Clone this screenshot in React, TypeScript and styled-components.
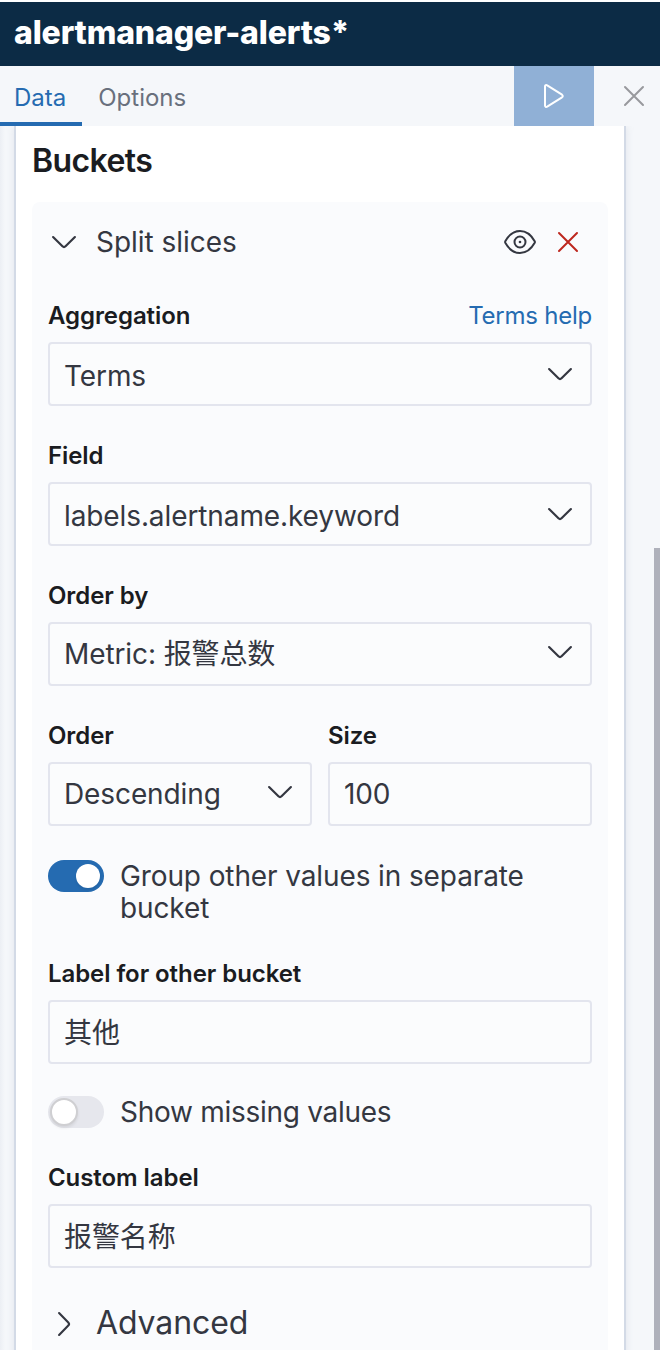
import React from "react";
import styled, { createGlobalStyle } from "styled-components";

const GlobalStyle = createGlobalStyle`
  *, *::before, *::after { box-sizing: border-box; }
  body {
    margin: 0;
    background: #ffffff;
    font-family: Inter, "Noto Sans CJK SC", sans-serif;
    color: #343741;
    overflow: hidden;
  }
  button, input { font: inherit; color: inherit; letter-spacing: inherit; }
`;

const Page = styled.div`
  width: 660px;
  height: 1350px;
  padding-top: 2px;
  display: flex;
  flex-direction: column;
  overflow: hidden;
  letter-spacing: -0.0065em;
`;

const TitleBar = styled.header`
  flex: 0 0 64px;
  padding: 0 14px;
  background: #0c2b45;
  color: #ffffff;
  font-size: 32px;
  font-weight: 800;
  line-height: 62px;
  letter-spacing: -0.005em;
`;

const TabBar = styled.nav`
  flex: 0 0 60px;
  display: flex;
  background: #f5f7fa;
`;

const Tab = styled.button<{ $active?: boolean }>`
  border: 0;
  border-bottom: 4px solid ${(p) => (p.$active ? "#256bb1" : "transparent")};
  background: none;
  padding: 7px 16px 0 ${(p) => (p.$active ? "14px" : "16px")};
  min-width: 82px;
  text-align: left;
  font-size: 24px;
  line-height: 48px;
  letter-spacing: 0;
  color: ${(p) => (p.$active ? "#256bb1" : "#69707d")};
`;

const BarButton = styled.button<{ $filled?: boolean }>`
  width: ${(p) => (p.$filled ? "80px" : "66px")};
  padding: ${(p) => (p.$filled ? "0" : "0 0 0 14px")};
  margin-left: ${(p) => (p.$filled ? "auto" : "0")};
  border: 0;
  display: flex;
  align-items: center;
  justify-content: center;
  background: ${(p) => (p.$filled ? "#90b0d6" : "transparent")};
  color: ${(p) => (p.$filled ? "#ffffff" : "#98999d")};
`;

const Body = styled.main`
  position: relative;
  flex: 1;
  min-height: 0;
  padding: 0 34px 0 14px;
  background: linear-gradient(90deg, #eceff4 0, #f5f7fa 5px, #f5f7fa 100%);
  overflow: hidden;
`;

const Panel = styled.section`
  height: 1300px;
  padding: 0 16px;
  border: solid #d3dae6;
  border-width: 0 2px;
  background: #ffffff;
  box-shadow: 0 0 8px rgba(152, 162, 179, 0.2);
`;

const PanelTitle = styled.h2`
  margin: 0;
  height: 76px;
  font-size: 32px;
  font-weight: 600;
  line-height: 70px;
  letter-spacing: -0.019em;
  color: #1a1c21;
`;

const Card = styled.div`
  height: 1200px;
  padding: 16px;
  border-radius: 8px;
  background: #fafbfd;
`;

const CardHeader = styled.div`
  display: flex;
  align-items: center;
  height: 48px;
  margin-bottom: 31px;
  font-size: 28px;
  letter-spacing: -0.001em;
`;

const HeaderLabel = styled.span`
  flex: 1;
  margin-left: 16px;
`;

const IconButton = styled.button`
  width: 48px;
  height: 48px;
  padding: 0;
  border: 0;
  background: none;
  display: flex;
  align-items: center;
  justify-content: center;
`;

const DangerButton = styled(IconButton)`
  color: #bd271e;
`;

const Field = styled.div`
  margin-bottom: 31px;
  flex: 1;
`;

const FieldHead = styled.div`
  display: flex;
  justify-content: space-between;
  height: 45px;
  font-size: 24px;
  line-height: 38px;
`;

const Label = styled.label`
  font-weight: 600;
  letter-spacing: -0.003em;
  color: #1a1c21;
`;

const HelpLink = styled.a`
  letter-spacing: -0.01em;
  color: #256bb1;
`;

const Control = styled.div`
  display: flex;
  align-items: center;
  justify-content: space-between;
  height: 64px;
  padding: 0 14px;
  border: 2px solid #e3e5ee;
  border-radius: 4px;
  background: #fbfcfd;
  font-size: 28px;
  line-height: 40px;
`;

const Value = styled.span<{ $drop: number }>`
  padding-top: ${(p) => p.$drop}px;
`;

const Arrow = styled.span<{ $lift: number }>`
  display: flex;
  padding-bottom: ${(p) => p.$lift}px;
`;

const TextInput = styled.input<{ $raised: boolean }>`
  width: 100%;
  height: 64px;
  padding: 0 14px ${(p) => (p.$raised ? "2px" : "0")};
  border: 2px solid #e3e5ee;
  border-radius: 4px;
  background: #fbfcfd;
  outline: 0;
  display: block;
  font-size: 28px;
`;

const Pair = styled.div`
  display: flex;
  gap: 16px;
`;

const SwitchRow = styled.div<{ $tight?: boolean }>`
  display: flex;
  gap: 16px;
  margin: ${(p) => (p.$tight ? "3px 0 31px" : "32px 0 31px")};
  font-size: 28px;
  line-height: 32px;
  letter-spacing: ${(p) => (p.$tight ? "-0.004em" : "-0.010em")};
`;

const Track = styled.span<{ $on?: boolean }>`
  flex: 0 0 56px;
  height: 32px;
  padding: ${(p) => (p.$on ? "4px" : "2px")};
  border-radius: 16px;
  display: flex;
  justify-content: ${(p) => (p.$on ? "flex-end" : "flex-start")};
  background: ${(p) => (p.$on ? "#256bb1" : "#e6e7ed")};
`;

const Thumb = styled.span<{ $on?: boolean }>`
  width: ${(p) => (p.$on ? "24px" : "28px")};
  height: ${(p) => (p.$on ? "24px" : "28px")};
  border: ${(p) => (p.$on ? "0" : "2px solid #cfcfd2")};
  border-radius: 50%;
  background: #ffffff;
  box-shadow: 0 2px 3px rgba(0, 0, 0, 0.08);
`;

const Advanced = styled.div`
  display: flex;
  align-items: flex-start;
  gap: 16px;
  height: 48px;
  padding-top: 9px;
  font-size: 32px;
  line-height: 30px;
`;

const ScrollThumb = styled.div`
  position: absolute;
  right: 0;
  top: 422px;
  bottom: 0;
  width: 6px;
  background: #afb1bb;
`;

function Chevron({ turned = false }: { turned?: boolean }) {
  return (
    <svg width="32" height="32" viewBox="0 0 16 16" fill="currentColor">
      <path
        transform={turned ? "rotate(-90 8 8)" : undefined}
        fillRule="nonzero"
        d="M13.069 5.157 8.384 9.768a.546.546 0 0 1-.768 0L2.93 5.158a.552.552 0 0 0-.771 0 .53.53 0 0 0 0 .759l4.684 4.61a1.65 1.65 0 0 0 2.312 0l4.684-4.61a.53.53 0 0 0 0-.76.552.552 0 0 0-.771 0Z"
      />
    </svg>
  );
}

function Cross() {
  return (
    <svg width="24" height="24" viewBox="0 0 24 24" fill="none" stroke="currentColor" strokeWidth="2" strokeLinecap="round">
      <path d="M3 3 21 21M21 3 3 21" />
    </svg>
  );
}

function Play() {
  return (
    <svg width="32" height="32" viewBox="0 0 32 32" fill="none" stroke="currentColor" strokeWidth="2" strokeLinejoin="round">
      <path d="M7 6.400v19.200c0 1.200 1.100 1.700 2.200 1.100l14.800-9.400c1-.7 1-1.900 0-2.600L9.200 5.300C8.100 4.700 7 5.200 7 6.400Z" />
    </svg>
  );
}

function Eye() {
  return (
    <svg width="32" height="32" viewBox="0 0 32 32" fill="none" stroke="currentColor" strokeWidth="2">
      <path d="M1.300 15.200C5.200 8.200 10 5 16 5s10.800 3.200 14.700 10.200q.4.800 0 1.600C26.800 23.800 22 27 16 27S5.200 23.800 1.300 16.800q-.4-.8 0-1.600Z" />
      <circle cx="16" cy="16" r="5.500" />
      <circle cx="16" cy="16" r="1.300" fill="currentColor" stroke="none" />
    </svg>
  );
}

type SelectFieldProps = {
  label: string;
  value: string;
  help?: string;
  drop?: number;
  lift?: number;
};

function SelectField({ label, value, help, drop = 0, lift = 0 }: SelectFieldProps) {
  return (
    <Field>
      <FieldHead>
        <Label>{label}</Label>
        {help && <HelpLink>{help}</HelpLink>}
      </FieldHead>
      <Control>
        <Value $drop={drop}>{value}</Value>
        <Arrow $lift={lift}>
          <Chevron />
        </Arrow>
      </Control>
    </Field>
  );
}

function InputField({ label, value, raised = false }: { label: string; value: string; raised?: boolean }) {
  return (
    <Field>
      <FieldHead>
        <Label>{label}</Label>
      </FieldHead>
      <TextInput $raised={raised} defaultValue={value} />
    </Field>
  );
}

function Switch({ on, label, tight }: { on?: boolean; label: string; tight?: boolean }) {
  return (
    <SwitchRow $tight={tight}>
      <Track $on={on}>
        <Thumb $on={on} />
      </Track>
      <span>{label}</span>
    </SwitchRow>
  );
}

export default function App() {
  return (
    <Page>
      <GlobalStyle />
      <TitleBar>alertmanager-alerts*</TitleBar>
      <TabBar>
        <Tab $active>Data</Tab>
        <Tab>Options</Tab>
        <BarButton $filled aria-label="Update">
          <Play />
        </BarButton>
        <BarButton aria-label="Discard">
          <Cross />
        </BarButton>
      </TabBar>
      <Body>
        <Panel>
          <PanelTitle>Buckets</PanelTitle>
          <Card>
            <CardHeader>
              <Chevron />
              <HeaderLabel>Split slices</HeaderLabel>
              <IconButton aria-label="Toggle">
                <Eye />
              </IconButton>
              <DangerButton aria-label="Remove">
                <Cross />
              </DangerButton>
            </CardHeader>
            <SelectField label="Aggregation" value="Terms" help="Terms help" drop={4} />
            <SelectField label="Field" value="labels.alertname.keyword" drop={4} />
            <SelectField label="Order by" value="Metric: 报警总数" lift={4} />
            <Pair>
              <SelectField label="Order" value="Descending" lift={4} />
              <InputField label="Size" value="100" />
            </Pair>
            <Switch on tight label="Group other values in separate bucket" />
            <InputField label="Label for other bucket" value="其他" raised />
            <Switch label="Show missing values" />
            <InputField label="Custom label" value="报警名称" raised />
            <Advanced>
              <Chevron turned />
              <span>Advanced</span>
            </Advanced>
          </Card>
        </Panel>
        <ScrollThumb />
      </Body>
    </Page>
  );
}
